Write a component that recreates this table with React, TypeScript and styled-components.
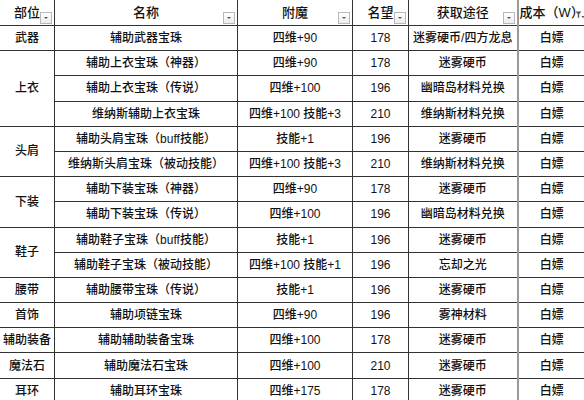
import React from "react";
import styled, { createGlobalStyle } from "styled-components";

const GlobalStyle = createGlobalStyle`
  html, body {
    margin: 0;
    padding: 0;
    background: #ffffff;
  }
  body {
    font-family: "Liberation Sans", "Noto Sans CJK SC", sans-serif;
    overflow: hidden;
  }
`;

type Row = {
  part?: string;
  span?: number;
  name: string;
  enchant: string;
  fame: string;
  source: string;
  cost: string;
};

const rows: Row[] = [
  { part: "武器", span: 1, name: "辅助武器宝珠", enchant: "四维+90", fame: "178", source: "迷雾硬币/四方龙息", cost: "白嫖" },
  { part: "上衣", span: 3, name: "辅助上衣宝珠（神器）", enchant: "四维+90", fame: "178", source: "迷雾硬币", cost: "白嫖" },
  { name: "辅助上衣宝珠（传说）", enchant: "四维+100", fame: "196", source: "幽暗岛材料兑换", cost: "白嫖" },
  { name: "维纳斯辅助上衣宝珠", enchant: "四维+100 技能+3", fame: "210", source: "维纳斯材料兑换", cost: "白嫖" },
  { part: "头肩", span: 2, name: "辅助头肩宝珠（buff技能）", enchant: "技能+1", fame: "196", source: "迷雾硬币", cost: "白嫖" },
  { name: "维纳斯头肩宝珠（被动技能）", enchant: "四维+100 技能+3", fame: "210", source: "维纳斯材料兑换", cost: "白嫖" },
  { part: "下装", span: 2, name: "辅助下装宝珠（神器）", enchant: "四维+90", fame: "178", source: "迷雾硬币", cost: "白嫖" },
  { name: "辅助下装宝珠（传说）", enchant: "四维+100", fame: "196", source: "幽暗岛材料兑换", cost: "白嫖" },
  { part: "鞋子", span: 2, name: "辅助鞋子宝珠（buff技能）", enchant: "技能+1", fame: "196", source: "迷雾硬币", cost: "白嫖" },
  { name: "辅助鞋子宝珠（被动技能）", enchant: "四维+100 技能+1", fame: "196", source: "忘却之光", cost: "白嫖" },
  { part: "腰带", span: 1, name: "辅助腰带宝珠（传说）", enchant: "技能+1", fame: "196", source: "迷雾硬币", cost: "白嫖" },
  { part: "首饰", span: 1, name: "辅助项链宝珠", enchant: "四维+90", fame: "196", source: "雾神材料", cost: "白嫖" },
  { part: "辅助装备", span: 1, name: "辅助辅助装备宝珠", enchant: "四维+100", fame: "178", source: "迷雾硬币", cost: "白嫖" },
  { part: "魔法石", span: 1, name: "辅助魔法石宝珠", enchant: "四维+100", fame: "210", source: "迷雾硬币", cost: "白嫖" },
  { part: "耳环", span: 1, name: "辅助耳环宝珠", enchant: "四维+175", fame: "178", source: "迷雾硬币", cost: "白嫖" },
];

const headers = ["部位", "名称", "附魔", "名望", "获取途径", "成本（W）"];
const widths = [55, 183, 115, 56, 109, 68];

function App() {
  return (
    <>
      <GlobalStyle />
      <Sheet>
        <colgroup>
          {widths.map((w, i) => (
            <col key={i} style={{ width: w }} />
          ))}
        </colgroup>
        <thead>
          <tr>
            {headers.map((h, i) => (
              <HeadCell key={h} $last={i === 5}>
                {h}
                {i < 5 ? (
                  <FilterButton />
                ) : (
                  <FilterIcon viewBox="0 0 10 9">
                    <path d="M0.5 0.5h6l-2.3 2.6v3.2l-1.4 1v-4.2z" fill="#555" />
                    <path d="M6.5 5h3l-1.5 2.2z" fill="#555" />
                  </FilterIcon>
                )}
              </HeadCell>
            ))}
          </tr>
        </thead>
        <tbody>
          {rows.map((r, i) => (
            <BodyRow key={i}>
              {r.part && <Cell rowSpan={r.span}>{r.part}</Cell>}
              <Cell>{r.name}</Cell>
              <Cell>{r.enchant}</Cell>
              <Cell>{r.fame}</Cell>
              <Cell>{r.source}</Cell>
              <Cell $last>{r.cost}</Cell>
            </BodyRow>
          ))}
        </tbody>
      </Sheet>
    </>
  );
}

export default App;

const Sheet = styled.table`
  width: 586px;
  margin: -1px 0 0 -1px;
  table-layout: fixed;
  border-collapse: collapse;
  color: #111111;
`;

const HeadCell = styled.th<{ $last?: boolean }>`
  position: relative;
  height: 24px;
  padding: 0;
  border: 1px solid #333333;
  border-left: ${(p) => (p.$last ? "2px solid #9a9a9a" : "1px solid #333333")};
  font-size: 13px;
  font-weight: 500;
  text-align: center;
  vertical-align: middle;
  white-space: nowrap;
  overflow: visible;
  line-height: 16px;
  padding-top: 1px;
`;

const FilterButton = styled.span`
  position: absolute;
  right: 2px;
  bottom: 1px;
  width: 10px;
  height: 10px;
  border: 1px solid #b8b8b8;
  background: linear-gradient(#ffffff, #ececec);
  &::after {
    content: "";
    position: absolute;
    left: 3px;
    top: 4px;
    border-left: 2px solid transparent;
    border-right: 2px solid transparent;
    border-top: 2px solid #555;
  }
`;

const FilterIcon = styled.svg`
  position: absolute;
  right: 0px;
  top: 11px;
  width: 10px;
  height: 9px;
`;

const BodyRow = styled.tr`
  height: 25.2px;
`;

const Cell = styled.td<{ $last?: boolean }>`
  padding: 0;
  border: 1px solid #333333;
  border-left: ${(p) => (p.$last ? "2px solid #9a9a9a" : "1px solid #333333")};
  font-size: 12px;
  font-weight: 500;
  line-height: 14px;
  text-align: center;
  vertical-align: middle;
  white-space: nowrap;
  overflow: hidden;
`;
